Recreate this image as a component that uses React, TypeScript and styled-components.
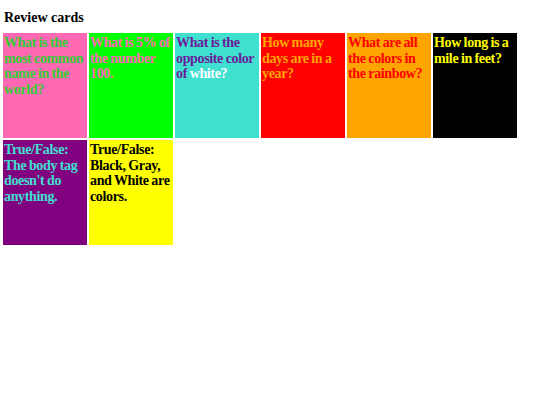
import React from "react";
import styled, { createGlobalStyle } from "styled-components";

const GlobalStyle = createGlobalStyle`
  body {
    margin: 0;
    padding: 0 3px;
    background: #ffffff;
    font-family: "Liberation Serif", "Times New Roman", serif;
  }
`;

const Title = styled("h3")`
  margin: 0;
  padding: 9px 1px 0;
  height: 24px;
  font-size: 14px;
  line-height: 17px;
  font-weight: bold;
  color: #000;
`;

const Grid = styled("div")`
  display: flex;
  flex-wrap: wrap;
  gap: 2px;
  width: 520px;
`;

const Card = styled("div")<{ $bg: string; $fg: string }>`
  width: 84px;
  height: 105px;
  padding: 2px 0 0 1px;
  box-sizing: border-box;
  background-color: ${(p) => p.$bg};
  color: ${(p) => p.$fg};
  font-size: 14px;
  font-weight: bold;
  line-height: 15.5px;
  letter-spacing: -0.35px;
  word-spacing: -0.5px;
`;

const White = styled("span")`
  color: #ffffff;
`;

const cards: { bg: string; fg: string; text: React.ReactNode }[] = [
  { bg: "#ff69b4", fg: "#32cd32", text: "What is the most common name in the world?" },
  { bg: "#00ff00", fg: "#ff69b4", text: "What is 5% of the number 100." },
  {
    bg: "#40e0d0",
    fg: "#6a1b9a",
    text: (
      <>
        What is the opposite color of <White>white?</White>
      </>
    ),
  },
  { bg: "#ff0000", fg: "#ffa500", text: "How many days are in a year?" },
  { bg: "#ffa500", fg: "#ff0000", text: "What are all the colors in the rainbow?" },
  { bg: "#000000", fg: "#ffff00", text: "How long is a mile in feet?" },
  { bg: "#800080", fg: "#40e0d0", text: "True/False: The body tag doesn't do anything." },
  { bg: "#ffff00", fg: "#000000", text: "True/False: Black, Gray, and White are colors." },
];

function App() {
  return (
    <>
      <GlobalStyle />
      <Title>Review cards</Title>
      <Grid>
        {cards.map((c, i) => (
          <Card key={i} $bg={c.bg} $fg={c.fg}>
            {c.text}
          </Card>
        ))}
      </Grid>
    </>
  );
}

export default App;
